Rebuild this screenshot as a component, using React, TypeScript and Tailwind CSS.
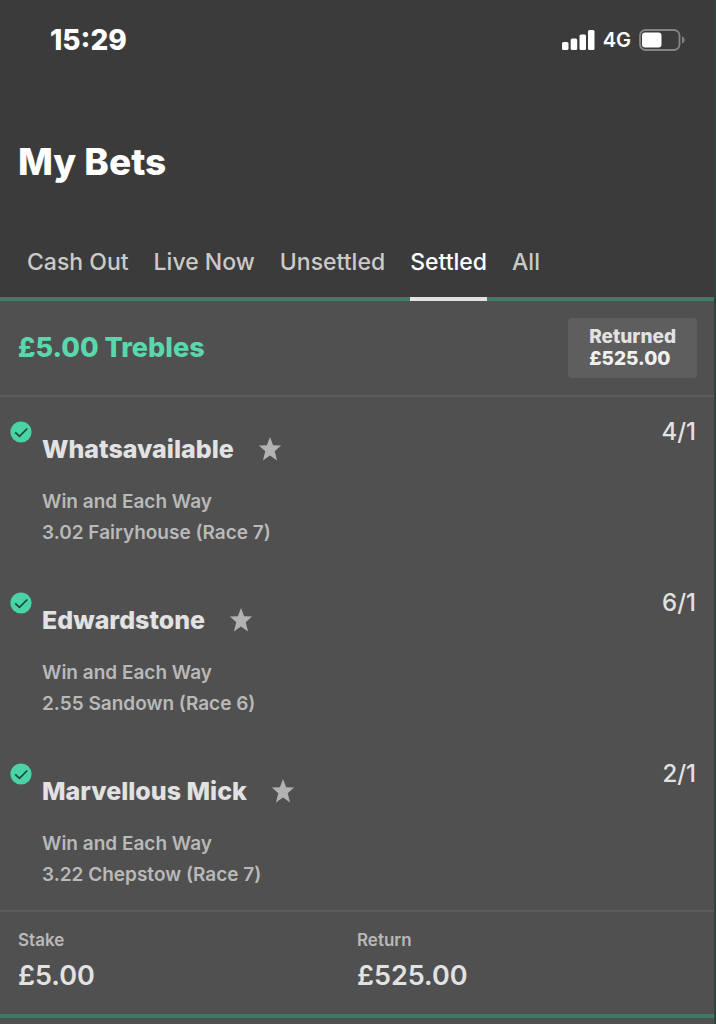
import { useState } from 'react'
import clsx from 'clsx'

const TABS = ['Cash Out', 'Live Now', 'Unsettled', 'Settled', 'All']

const SELECTIONS = [
  { name: 'Whatsavailable', market: 'Win and Each Way', event: '3.02 Fairyhouse (Race 7)', odds: '4/1' },
  { name: 'Edwardstone', market: 'Win and Each Way', event: '2.55 Sandown (Race 6)', odds: '6/1' },
  { name: 'Marvellous Mick', market: 'Win and Each Way', event: '3.22 Chepstow (Race 7)', odds: '2/1' },
]

function SignalIcon() {
  return (
    <svg width="33" height="20" viewBox="0 0 33 20" fill="#fff" aria-hidden="true">
      <rect x="0" y="12" width="6.5" height="8" rx="1.5" />
      <rect x="8.7" y="8.5" width="6.5" height="11.5" rx="1.5" />
      <rect x="17.5" y="4.5" width="6.5" height="15.5" rx="1.5" />
      <rect x="26" y="0" width="6.5" height="20" rx="1.5" />
    </svg>
  )
}

function BatteryIcon() {
  return (
    <svg width="46" height="22" viewBox="0 0 46 22" aria-hidden="true">
      <rect x="1" y="1" width="39.5" height="20" rx="5.5" fill="none" stroke="#858585" strokeWidth="1.8" />
      <rect x="3" y="3.5" width="19.5" height="15" rx="3" fill="#fff" />
      <path d="M43 7.5c1.6.6 2.6 1.9 2.6 3.5s-1 2.9-2.6 3.5z" fill="#858585" />
    </svg>
  )
}

function WonIcon() {
  return (
    <svg width="22" height="22" viewBox="0 0 22 22" role="img" aria-label="Won">
      <circle cx="11" cy="11" r="10.6" fill="#49d3a6" />
      <path d="M5.2 11.3l4.3 4 7.8-7.8" fill="none" stroke="#17483a" strokeWidth="1.7" />
    </svg>
  )
}

function StarIcon() {
  return (
    <svg width="24" height="26" viewBox="0 0 24 26" fill="#b2b2b2" aria-hidden="true">
      <path d="M12 1l3.1 8.3 8 .3-6.4 5.6 2.4 9.3L12 19.5l-7.1 5 2.4-9.3L.9 9.6l8-.3z" />
    </svg>
  )
}

export default function App() {
  const [activeTab, setActiveTab] = useState('Settled')
  const [favourites, setFavourites] = useState<string[]>([])

  const toggleFavourite = (name: string) => {
    setFavourites((prev) => (prev.includes(name) ? prev.filter((n) => n !== name) : [...prev, name]))
  }

  return (
    <div className="min-h-screen border-r-2 border-[#2d473e] bg-[#505050] font-['Inter','Liberation_Sans',sans-serif] text-[#e2e2e2]">
      <header className="bg-[#3b3b3b]">
        {/* Status bar */}
        <div className="flex h-20 items-center justify-between pr-[29px] pl-[50px] text-white">
          <time className="text-[28px] font-extrabold">15:29</time>
          <div className="flex items-center gap-2">
            <SignalIcon />
            <span className="text-[20px] font-semibold">4G</span>
            <BatteryIcon />
          </div>
        </div>

        <h1 className="px-[18px] pt-[58px] text-[37px] leading-12 font-extrabold text-white">My Bets</h1>

        {/* Tabs */}
        <nav className="mt-[38px] flex gap-[25px] border-b-4 border-[#3f7b66] px-[27px]">
          {TABS.map((tab) => (
            <button
              key={tab}
              type="button"
              onClick={() => setActiveTab(tab)}
              className={clsx(
                '-mb-1 cursor-pointer border-b-4 pt-[22px] pb-[19px] text-[23px] leading-8 font-medium',
                tab === activeTab ? 'border-[#e3dfe2] text-white' : 'border-transparent text-[#cacaca]'
              )}
            >
              {tab}
            </button>
          ))}
        </nav>
      </header>

      <main className="border-b-4 border-[#3f7b66]">
        <section className="flex items-center justify-between border-b-2 border-[#5c5c5c] pt-[17px] pr-[17px] pb-[17px] pl-[18px]">
          <h2 className="text-[27px] leading-8 font-extrabold text-[#5bd7ae]">£5.00 Trebles</h2>
          <div className="rounded-sm bg-[#5e5e5e] px-[21px] py-2 text-[19px] leading-[22px] font-extrabold">
            <p>Returned</p>
            <p className="text-[#f0f0f0]">£525.00</p>
          </div>
        </section>

        <ul>
          {SELECTIONS.map(({ name, market, event, odds }) => (
            <li key={name} className="flex items-start pr-[18px] pb-5 pl-[10px]">
              <div className="pt-6">
                <WonIcon />
              </div>
              <div className="flex-1 pt-[37px] pl-[10px]">
                <div className="flex items-center gap-6">
                  <h3 className="text-[25px] leading-[30px] font-extrabold">{name}</h3>
                  <button
                    type="button"
                    aria-label={`Favourite ${name}`}
                    aria-pressed={favourites.includes(name)}
                    onClick={() => toggleFavourite(name)}
                    className="cursor-pointer"
                  >
                    <StarIcon />
                  </button>
                </div>
                <p className="mt-[22px] text-[19px] leading-[31px] font-semibold text-[#b9b9b9]">{market}</p>
                <p className="text-[19px] leading-[31px] font-semibold text-[#b9b9b9]">{event}</p>
              </div>
              <span className="pt-5 text-[24px] leading-[30px] font-medium">{odds}</span>
            </li>
          ))}
        </ul>

        <dl className="grid grid-cols-2 border-t-2 border-[#5c5c5c] px-[18px] pt-4 pb-[18px]">
          <div>
            <dt className="text-[17px] leading-6 font-semibold text-[#b9b9b9]">Stake</dt>
            <dd className="mt-1 text-[27px] leading-10 font-semibold">£5.00</dd>
          </div>
          <div>
            <dt className="text-[17px] leading-6 font-semibold text-[#b9b9b9]">Return</dt>
            <dd className="mt-1 text-[27px] leading-10 font-semibold">£525.00</dd>
          </div>
        </dl>
      </main>
    </div>
  )
}
